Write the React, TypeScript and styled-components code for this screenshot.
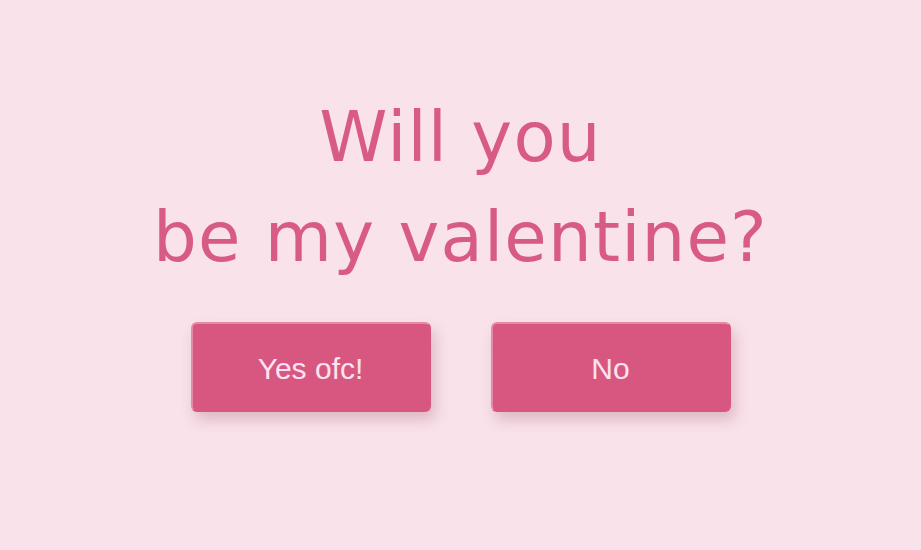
import styled, { createGlobalStyle } from "styled-components";

const GlobalStyle = createGlobalStyle`
  html, body {
    margin: 0;
    padding: 0;
    background: #f9e2ea;
  }
`;

const App = () => {
  return (
    <Page>
      <GlobalStyle />
      <Question>
        Will you
        <br />
        be my valentine?
      </Question>
      <ButtonRow>
        <ChoiceButton>Yes ofc!</ChoiceButton>
        <ChoiceButton>No</ChoiceButton>
      </ButtonRow>
    </Page>
  );
};

export default App;

const Page = styled.div`
  display: flex;
  flex-direction: column;
  align-items: center;
  height: 550px;
  padding-top: 87px;
  box-sizing: border-box;
  background: #f9e2ea;
`;

const Question = styled.h1`
  margin: 0;
  color: #d85b85;
  text-align: center;
  font-family: "DejaVu Sans", "Noto Sans", sans-serif;
  font-size: 69px;
  font-weight: 400;
  line-height: 100px;
  letter-spacing: 1.2px;
`;

const ButtonRow = styled.div`
  display: flex;
  gap: 60px;
  margin-top: 35px;
`;

const ChoiceButton = styled.button`
  width: 240px;
  height: 90px;
  border: 2px solid #d85781;
  border-top-color: #e58aa6;
  border-left-color: #e58aa6;
  border-radius: 6px;
  background: #d85781;
  color: #fde3ef;
  font-family: "Liberation Sans", Arial, sans-serif;
  font-size: 30px;
  padding: 4px 0 0;
  box-shadow: 4px 8px 14px rgba(150, 80, 105, 0.28);
  cursor: pointer;
`;
